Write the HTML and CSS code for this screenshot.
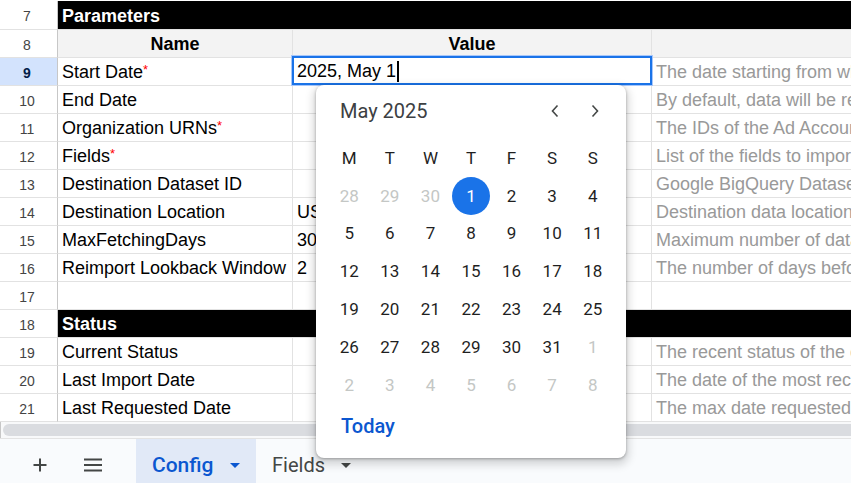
FILE: index.html
```html
<!DOCTYPE html>
<html lang="en">
<head>
  <meta charset="UTF-8">
  <meta name="viewport" content="width=device-width, initial-scale=1.0">
  <title>Config</title>
  <link rel="stylesheet" href="styles.css">
</head>
<body>
  <div class="sheet">
    <div class="grid">
      <!-- row 7 -->
      <div class="rownum">7</div>
      <div class="cell section">Parameters</div>

      <!-- row 8 -->
      <div class="rownum">8</div>
      <div class="cell head">Name</div>
      <div class="cell head">Value</div>
      <div class="cell head"></div>

      <!-- row 9 -->
      <div class="rownum current">9</div>
      <div class="cell">Start Date<span class="req">*</span></div>
      <div class="cell editing">
        <div class="editor">2025, May 1<span class="caret"></span></div>
      </div>
      <div class="cell note">The date starting from which data will be imported</div>

      <div class="rownum">10</div>
      <div class="cell">End Date</div>
      <div class="cell"></div>
      <div class="cell note">By default, data will be requested up to yesterday</div>

      <div class="rownum">11</div>
      <div class="cell">Organization URNs<span class="req">*</span></div>
      <div class="cell"></div>
      <div class="cell note">The IDs of the Ad Accounts to import</div>

      <div class="rownum">12</div>
      <div class="cell">Fields<span class="req">*</span></div>
      <div class="cell"></div>
      <div class="cell note">List of the fields to import</div>

      <div class="rownum">13</div>
      <div class="cell">Destination Dataset ID</div>
      <div class="cell"></div>
      <div class="cell note">Google BigQuery Dataset ID</div>

      <div class="rownum">14</div>
      <div class="cell">Destination Location</div>
      <div class="cell">US</div>
      <div class="cell note">Destination data location</div>

      <div class="rownum">15</div>
      <div class="cell">MaxFetchingDays</div>
      <div class="cell">30</div>
      <div class="cell note">Maximum number of data days to fetch</div>

      <div class="rownum">16</div>
      <div class="cell">Reimport Lookback Window</div>
      <div class="cell">2</div>
      <div class="cell note">The number of days before the last import</div>

      <div class="rownum">17</div>
      <div class="cell"></div>
      <div class="cell"></div>
      <div class="cell"></div>

      <!-- row 18 -->
      <div class="rownum">18</div>
      <div class="cell section">Status</div>

      <div class="rownum">19</div>
      <div class="cell">Current Status</div>
      <div class="cell"></div>
      <div class="cell note">The recent status of the connector</div>

      <div class="rownum">20</div>
      <div class="cell">Last Import Date</div>
      <div class="cell"></div>
      <div class="cell note">The date of the most recent import</div>

      <div class="rownum">21</div>
      <div class="cell">Last Requested Date</div>
      <div class="cell"></div>
      <div class="cell note">The max date requested</div>
    </div>

    <div class="hscroll">
      <div class="hscroll-corner"></div>
      <div class="hscroll-track"><div class="hscroll-thumb"></div></div>
    </div>
  </div>

  <div class="tabs">
    <div class="tab-btn">
      <svg width="16" height="16" viewBox="0 0 16 16"><path d="M8 1.5v13M1.5 8h13" stroke="#444746" stroke-width="2" fill="none"/></svg>
    </div>
    <div class="tab-btn">
      <svg width="20" height="14" viewBox="0 0 20 14"><path d="M1 1.5h18M1 7h18M1 12.5h18" stroke="#444746" stroke-width="2" fill="none"/></svg>
    </div>
    <div class="tab active">Config <span class="arrow"></span></div>
    <div class="tab">Fields <span class="arrow"></span></div>
  </div>

  <!-- date picker popup -->
  <div class="datepicker">
    <div class="dp-head">
      <div class="dp-title">May 2025</div>
      <div class="dp-nav">
        <svg width="12" height="14" viewBox="0 0 12 14"><polyline points="8.5,1.5 3.5,7 8.5,12.5" stroke="#444746" stroke-width="1.6" fill="none"/></svg>
      </div>
      <div class="dp-nav">
        <svg width="12" height="14" viewBox="0 0 12 14"><polyline points="3.5,1.5 8.5,7 3.5,12.5" stroke="#444746" stroke-width="1.6" fill="none"/></svg>
      </div>
    </div>
    <div class="dp-grid">
      <div class="dp-day">M</div><div class="dp-day">T</div><div class="dp-day">W</div><div class="dp-day">T</div><div class="dp-day">F</div><div class="dp-day">S</div><div class="dp-day">S</div>

      <div class="dp-date muted">28</div><div class="dp-date muted">29</div><div class="dp-date muted">30</div><div class="dp-date"><span class="selected">1</span></div><div class="dp-date">2</div><div class="dp-date">3</div><div class="dp-date">4</div>
      <div class="dp-date">5</div><div class="dp-date">6</div><div class="dp-date">7</div><div class="dp-date">8</div><div class="dp-date">9</div><div class="dp-date">10</div><div class="dp-date">11</div>
      <div class="dp-date">12</div><div class="dp-date">13</div><div class="dp-date">14</div><div class="dp-date">15</div><div class="dp-date">16</div><div class="dp-date">17</div><div class="dp-date">18</div>
      <div class="dp-date">19</div><div class="dp-date">20</div><div class="dp-date">21</div><div class="dp-date">22</div><div class="dp-date">23</div><div class="dp-date">24</div><div class="dp-date">25</div>
      <div class="dp-date">26</div><div class="dp-date">27</div><div class="dp-date">28</div><div class="dp-date">29</div><div class="dp-date">30</div><div class="dp-date">31</div><div class="dp-date muted">1</div>
      <div class="dp-date muted">2</div><div class="dp-date muted">3</div><div class="dp-date muted">4</div><div class="dp-date muted">5</div><div class="dp-date muted">6</div><div class="dp-date muted">7</div><div class="dp-date muted">8</div>
    </div>
    <div class="dp-foot">Today</div>
  </div>
</body>
</html>
```

FILE: styles.css
```css
/* General Styling */
body {
  margin: 0;
  padding: 0;
  font-family: "Liberation Sans", Arial, sans-serif;
  background-color: #fff;
  color: #000;
  width: 851px;
  height: 483px;
  overflow: hidden;
  position: relative;
}

/* Sheet grid */
.grid {
  margin-top: 1px;
  display: grid;
  grid-template-columns: 58px 235px 359px 420px;
  grid-template-rows: 29px repeat(14, 28px);
  font-size: 18px;
}

.rownum,
.cell {
  box-sizing: border-box;
  border-bottom: 1px solid #e2e2e2;
  border-right: 1px solid #e2e2e2;
  white-space: nowrap;
  overflow: hidden;
  padding-top: 2px;
}

.rownum {
  display: flex;
  align-items: center;
  justify-content: center;
  font-size: 14px;
  color: #444;
  border-right-color: #c7c7c7;
  padding-right: 3px;
}

.rownum.current {
  background-color: #d3e3fd;
  color: #041e49;
  font-weight: bold;
}

.cell {
  display: flex;
  align-items: center;
  padding-left: 4px;
  padding-right: 4px;
  line-height: 25px;
}

.cell.section {
  grid-column: span 3;
  background-color: #000;
  color: #fff;
  font-weight: bold;
  border-color: #000;
  border-bottom-color: #e2e2e2;
}

.cell.head {
  background-color: #f3f3f3;
  font-weight: bold;
  justify-content: center;
}

.cell.note {
  color: #999;
}

.req {
  color: #f00;
  font-size: 13px;
  align-self: flex-start;
  line-height: 18px;
  margin-top: 1px;
}

/* active cell editor */
.cell.editing {
  position: relative;
  overflow: visible;
}

.editor {
  position: absolute;
  top: -2px;
  left: -1px;
  right: -1px;
  bottom: 0;
  box-sizing: border-box;
  border: 2px solid #1a73e8;
  box-shadow: 0 0 0 1px #a8c7fa;
  background-color: #fff;
  padding: 2px 3px 0;
  display: flex;
  align-items: center;
  z-index: 1;
}

.caret {
  display: inline-block;
  width: 2px;
  height: 21px;
  background-color: #000;
  margin-left: 1px;
}

/* horizontal scrollbar */
.hscroll {
  display: flex;
  height: 17px;
  box-sizing: border-box;
  border-bottom: 1px solid #e3e3e3;
  background-color: #f8f9fa;
}

.hscroll-corner {
  width: 58px;
  box-sizing: border-box;
  border-right: 1px solid #c7c7c7;
  background-color: #fafafa;
}

.hscroll-track {
  flex: 1;
  padding: 2px 0 0 2px;
}

.hscroll-thumb {
  height: 12px;
  width: 900px;
  border-radius: 6px;
  background-color: #dadce0;
}

/* sheet tabs */
.tabs {
  display: flex;
  align-items: center;
  height: 52px;
  padding-left: 20px;
  background-color: #f9fbfd;
  font-family: Roboto, "Liberation Sans", sans-serif;
  font-size: 20px;
}

.tab-btn {
  width: 40px;
  height: 40px;
  display: flex;
  align-items: center;
  justify-content: center;
  margin-right: 13px;
}

.tab-btn:nth-child(2) {
  margin-right: 23px;
}

.tab {
  height: 100%;
  display: flex;
  align-items: center;
  padding: 0 16px;
  color: #444746;
  gap: 16px;
}

.tab.active {
  background-color: #e1e9f7;
  color: #0b57d0;
  font-weight: 500;
  width: 120px;
  box-sizing: border-box;
  font-size: 21px;
}

.arrow {
  width: 0;
  height: 0;
  border-left: 5px solid transparent;
  border-right: 5px solid transparent;
  border-top: 5px solid #444746;
  margin-top: 1px;
}

.tab.active .arrow {
  border-top-color: #0b57d0;
}

/* date picker popup */
.datepicker {
  position: absolute;
  top: 85px;
  left: 316px;
  width: 310px;
  box-sizing: border-box;
  padding-bottom: 10px;
  background-color: #fff;
  border-radius: 8px;
  box-shadow: 0 1px 3px rgba(0, 0, 0, 0.3), 0 4px 8px 3px rgba(0, 0, 0, 0.15);
  font-family: Roboto, "Liberation Sans", sans-serif;
  color: #1f1f1f;
  z-index: 2;
}

.dp-head {
  display: flex;
  align-items: center;
  height: 52px;
  padding: 0 11px 0 24px;
}

.dp-title {
  flex: 1;
  font-size: 20px;
  color: #3c4043;
}

.dp-nav {
  width: 40px;
  height: 40px;
  display: flex;
  align-items: center;
  justify-content: center;
}

.dp-grid {
  margin-top: 2px;
  padding: 0 13px;
  display: grid;
  grid-template-columns: repeat(7, 1fr);
  grid-auto-rows: 37.8px;
  font-size: 17px;
}

.dp-day,
.dp-date {
  display: flex;
  align-items: center;
  justify-content: center;
}

.dp-date.muted {
  color: #c4c7c5;
}

.selected {
  width: 38px;
  height: 38px;
  border-radius: 50%;
  background-color: #1a73e8;
  color: #fff;
  display: flex;
  align-items: center;
  justify-content: center;
}

.dp-foot {
  height: 44px;
  line-height: 44px;
  padding-left: 25px;
  font-size: 20px;
  font-weight: 500;
  color: #0b57d0;
}
```
